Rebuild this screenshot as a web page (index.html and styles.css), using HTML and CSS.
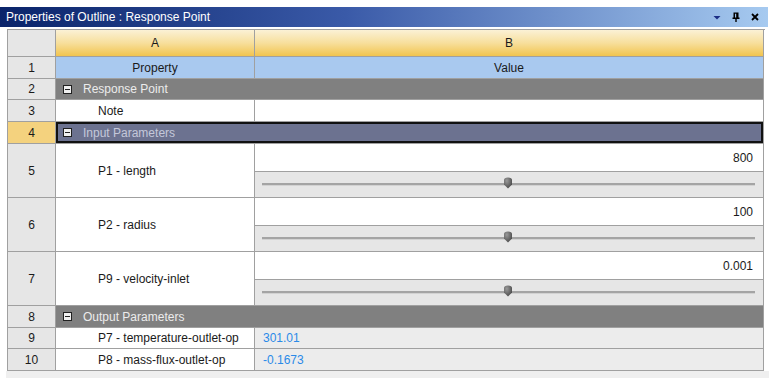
FILE: index.html
```html
<!DOCTYPE html>
<html>
<head>
<meta charset="utf-8">
<link rel="stylesheet" href="styles.css">
</head>
<body>
<div class="panel">
  <div class="titlebar">
    <span class="title">Properties of Outline : Response Point</span>
    <div class="tools">
      <svg class="ico" width="8" height="8" viewBox="0 0 8 8"><path d="M0.5 3h7l-3.5 3.5z" fill="#1c2e86"/></svg>
      <svg class="ico" width="8" height="10" viewBox="0 0 8 10"><path d="M1.5 0.5h5v5h1v1.5H4.7v3H3.3v-3H0.5V5.5h1z M3 1.8v3.7h1.2V1.8z" fill="#000" fill-rule="evenodd"/></svg>
      <svg class="ico" width="8" height="8" viewBox="0 0 8 8"><path d="M1 1l6 6M7 1L1 7" stroke="#000" stroke-width="1.8"/></svg>
    </div>
  </div>
  <div class="body">
    <div class="grid">
      <div class="rh corner"></div><div class="colhead">A</div><div class="colhead">B</div>

      <div class="rh">1</div><div class="lbl">Property</div><div class="lbl">Value</div>

      <div class="rh">2</div><div class="group"><span class="minus"></span>Response Point</div>

      <div class="rh">3</div><div class="prop">Note</div><div class="val"></div>

      <div class="rh sel">4</div><div class="group selrow"><span class="minus"></span>Input Parameters</div>

      <div class="rh">5</div><div class="prop">P1 - length</div>
      <div class="slider"><div class="num">800</div><div class="track"><span class="line"></span><svg class="thumb" width="10" height="12" viewBox="0 0 10 12"><defs><radialGradient id="g1" cx="0.35" cy="0.3" r="0.8"><stop offset="0" stop-color="#9a9a9a"/><stop offset="1" stop-color="#444444"/></radialGradient></defs><path d="M1 3Q1 0.5 5 0.5Q9 0.5 9 3V7.5L5 11.5L1 7.5z" fill="url(#g1)"/></svg></div></div>

      <div class="rh">6</div><div class="prop">P2 - radius</div>
      <div class="slider"><div class="num">100</div><div class="track"><span class="line"></span><svg class="thumb" width="10" height="12" viewBox="0 0 10 12"><path d="M1 3Q1 0.5 5 0.5Q9 0.5 9 3V7.5L5 11.5L1 7.5z" fill="url(#g1)"/></svg></div></div>

      <div class="rh">7</div><div class="prop">P9 - velocity-inlet</div>
      <div class="slider"><div class="num">0.001</div><div class="track"><span class="line"></span><svg class="thumb" width="10" height="12" viewBox="0 0 10 12"><path d="M1 3Q1 0.5 5 0.5Q9 0.5 9 3V7.5L5 11.5L1 7.5z" fill="url(#g1)"/></svg></div></div>

      <div class="rh">8</div><div class="group"><span class="minus"></span>Output Parameters</div>

      <div class="rh">9</div><div class="prop">P7 - temperature-outlet-op</div><div class="out">301.01</div>

      <div class="rh">10</div><div class="prop">P8 - mass-flux-outlet-op</div><div class="out">-0.1673</div>
    </div>
    <div class="footer"></div>
  </div>
</div>
</body>
</html>
```

FILE: styles.css
```css
html, body {
  margin: 0;
  padding: 0;
  background: #ffffff;
}
body {
  font-family: "Liberation Sans", Arial, sans-serif;
  font-size: 12px;
  color: #1a1a1a;
}
.panel {
  width: 768px;
  padding-top: 7px;
}
.titlebar {
  height: 20px;
  display: flex;
  align-items: center;
  justify-content: space-between;
  background: linear-gradient(to right, #0a246a 0%, #3a5aa8 45%, #a6caf0 100%);
  padding: 0 9px 0 6px;
}
.title {
  color: #ffffff;
  font-size: 12px;
}
.tools {
  display: flex;
  align-items: center;
  gap: 11px;
}
.body {
  padding: 2px 4px 0 7px;
  background: #ffffff;
}
.grid {
  display: grid;
  grid-template-columns: 48px 199px 509px;
  grid-template-rows: 27px 22px 21px 22px 22px 54px 54px 54px 22px 21px 22px;
  border-left: 1px solid #a0a0a0;
  border-top: 1px solid #a0a0a0;
  width: 757px;
}
.grid > div {
  border-right: 1px solid #a0a0a0;
  border-bottom: 1px solid #a0a0a0;
  display: flex;
  align-items: center;
  min-width: 0;
}
.rh {
  background: #e6e6e6;
  justify-content: center;
}
.rh.sel {
  background: #f4d27e;
}
.colhead {
  justify-content: center;
  background: linear-gradient(to bottom, #fbf1d6 0%, #f7df9c 50%, #f2c44e 100%);
}
.lbl {
  justify-content: center;
  background: #a9c9ef;
}
.group {
  grid-column: span 2;
  background: #808080;
  color: #ececec;
  padding-left: 7px;
}
.group.selrow {
  background: #6c7290;
  color: #c4c8da;
  box-shadow: inset 0 0 0 2px #111111;
}
.minus {
  width: 7px;
  height: 7px;
  background: #f0f0f0;
  border: 1px solid #202020;
  margin-right: 11px;
  position: relative;
}
.minus::after {
  content: "";
  position: absolute;
  left: 1px;
  right: 1px;
  top: 3px;
  height: 1px;
  background: #202020;
}
.prop {
  background: #ffffff;
  padding-left: 42px;
  white-space: nowrap;
}
.val {
  background: #ffffff;
}
.slider {
  flex-direction: column;
  align-items: stretch !important;
  background: #ffffff;
}
.num {
  border-bottom: 1px solid #a0a0a0;
  display: flex;
  align-items: center;
  justify-content: flex-end;
  padding-right: 10px;
  box-sizing: border-box;
  height: 28px;
}
.track {
  flex: 1;
  background: #e6e6e6;
  display: flex;
  align-items: center;
  justify-content: center;
  padding: 0 8px 0 7px;
  position: relative;
}
.line {
  flex: 1;
  height: 2px;
  background: #a4a4a4;
  border-bottom: 1px solid #d2d2d2;
}
.thumb {
  position: absolute;
  left: 248px;
  top: 5px;
}
.out {
  background: #ececec;
  color: #2a8ae8;
  padding-left: 8px;
}
.footer {
  height: 7px;
  background: #efefef;
  margin-left: -1px;
  width: 763px;
}
```
